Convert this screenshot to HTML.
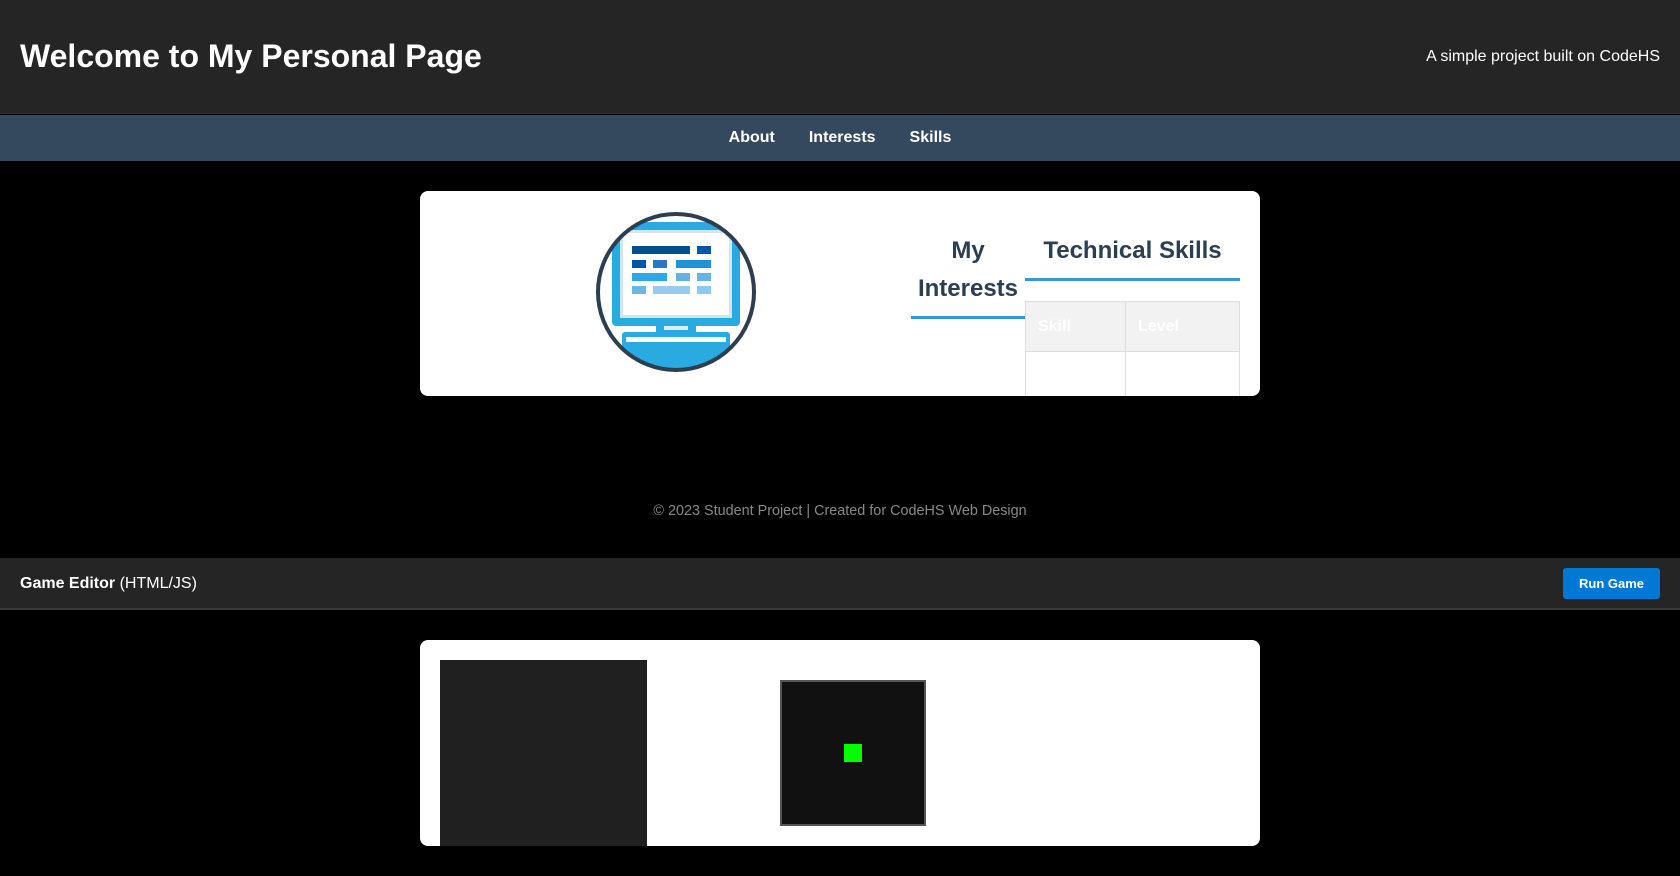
<!DOCTYPE html>
<html><head><meta charset="utf-8"><style>
*{margin:0;padding:0;box-sizing:border-box}
body{width:1680px;height:876px;background:#000;font-family:"Liberation Sans",Arial,sans-serif;position:relative;overflow:hidden}
.a{position:absolute}
</style></head><body>
<div class="a" style="left:0;top:0;width:1680px;height:114px;background:#252525;border-bottom:1px solid #333"></div>
<div class="a" style="left:20px;top:36px;color:#fff;font-size:32px;font-weight:bold;line-height:40px">Welcome to My Personal Page</div>
<div class="a" style="right:20px;top:47px;color:#fff;font-size:16px;line-height:20px">A simple project built on CodeHS</div>
<div class="a" style="left:0;top:115px;width:1680px;height:46px;background:#34495e"></div>
<div class="a" style="left:0;top:115px;width:1680px;height:46px;display:flex;justify-content:center;align-items:center;gap:34px;color:#fff;font-weight:bold;font-size:16px"><span>About</span><span>Interests</span><span>Skills</span></div>

<div class="a" style="left:420px;top:191px;width:840px;height:205px;background:#fff;border-radius:8px;overflow:hidden">
 <svg class="a" style="left:174px;top:19px" width="164" height="164" viewBox="0 0 164 164">
  <defs><clipPath id="c"><circle cx="82" cy="82" r="77"/></clipPath></defs>
  <g clip-path="url(#c)">
  <rect x="18" y="12" width="128" height="104" rx="4" fill="#29abe2"/>
  <rect x="26" y="20" width="112" height="88" fill="#cfe6f6"/>
  <rect x="29" y="23" width="106" height="82" fill="#fff"/>
  <rect x="38" y="36" width="58" height="8" fill="#00508f"/>
  <rect x="103" y="36" width="14" height="8" fill="#0057a8"/>
  <rect x="38" y="50" width="14" height="8" fill="#0057a8"/>
  <rect x="59" y="50" width="14" height="8" fill="#2878c8"/>
  <rect x="82" y="50" width="35" height="8" fill="#1f93d8"/>
  <rect x="38" y="63" width="35" height="8" fill="#29abe2"/>
  <rect x="82" y="63" width="14" height="8" fill="#66b2e0"/>
  <rect x="103" y="63" width="14" height="8" fill="#66b2e0"/>
  <rect x="38" y="76" width="14" height="8" fill="#6ab8e6"/>
  <rect x="59" y="76" width="37" height="8" fill="#9ccbea"/>
  <rect x="103" y="76" width="14" height="8" fill="#8ec8ee"/>
  <rect x="62" y="116" width="40" height="6" fill="#29abe2"/>
  <rect x="70" y="116" width="24" height="4" fill="#dbeaf7"/>
  <rect x="28" y="122" width="108" height="26" rx="3" fill="#29abe2"/>
  <rect x="32" y="127" width="100" height="5" fill="#fff"/>
  <rect x="20" y="148" width="124" height="10" fill="#29abe2"/>
  </g>
  <circle cx="82" cy="82" r="78" fill="none" stroke="#2c3e50" stroke-width="4"/>
 </svg>
 <div class="a" style="left:491px;top:41px;width:114px;text-align:center;color:#2c3e50;font-weight:bold;font-size:24px;line-height:38px">My Interests</div>
 <div class="a" style="left:491px;top:125px;width:114px;height:3px;background:#3498db"></div>
 <div class="a" style="left:605px;top:41px;width:215px;text-align:center;color:#2c3e50;font-weight:bold;font-size:24px;line-height:38px">Technical Skills</div>
 <div class="a" style="left:605px;top:87px;width:215px;height:3px;background:#3498db"></div>
 <div class="a" style="left:605px;top:110px;width:215px;height:51px;background:#f2f2f2;border:1px solid #ddd"></div>
 <div class="a" style="left:705px;top:110px;width:1px;height:100px;background:#ddd"></div>
 <div class="a" style="left:819px;top:110px;width:1px;height:100px;background:#ddd"></div>
 <div class="a" style="left:605px;top:110px;width:1px;height:100px;background:#ddd"></div>
 <div class="a" style="left:618px;top:127px;color:#fff;font-weight:bold;font-size:16px">Skill</div>
 <div class="a" style="left:718px;top:127px;color:#fff;font-weight:bold;font-size:16px">Level</div>
</div>

<div class="a" style="left:0;top:503px;width:1680px;text-align:center;color:#888;font-size:14.4px">© 2023 Student Project | Created for CodeHS Web Design</div>

<div class="a" style="left:0;top:558px;width:1680px;height:52px;background:#252525;border-bottom:2px solid #3a3a3a"></div>
<div class="a" style="left:20px;top:575px;color:#fff;font-size:16px"><b>Game Editor</b> (HTML/JS)</div>
<div class="a" style="left:1563px;top:568px;width:97px;height:31px;background:#0078d4;border-radius:3px;color:#fff;font-weight:bold;font-size:13px;text-align:center;line-height:31px">Run Game</div>

<div class="a" style="left:420px;top:640px;width:840px;height:206px;background:#fff;border-radius:8px;overflow:hidden">
 <div class="a" style="left:20px;top:20px;width:207px;height:200px;background:#202020"></div>
 <div class="a" style="left:360px;top:40px;width:146px;height:146px;background:#111;border:2px solid #555"></div>
 <div class="a" style="left:424px;top:104px;width:18px;height:18px;background:#00ff00"></div>
</div>
</body></html>
